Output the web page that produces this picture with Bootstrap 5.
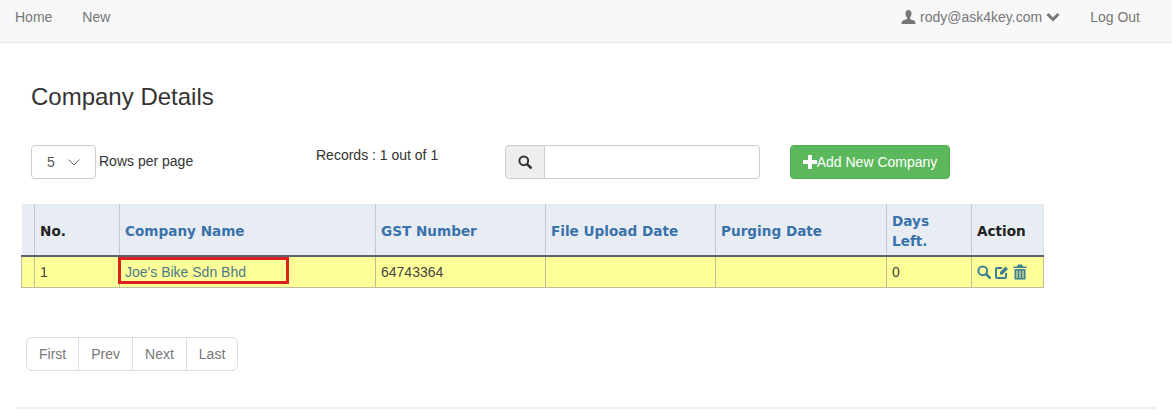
<!DOCTYPE html>
<html lang="en">
<head>
    <meta charset="UTF-8">
    <title>Company Details</title>
    <link href="https://cdn.jsdelivr.net/npm/bootstrap@5.3.2/dist/css/bootstrap.min.css" rel="stylesheet">
    <style>
        body {
            font-family: "Liberation Sans", Arial, sans-serif;
            font-size: 14px;
            color: #333;
            height: 420px;
            overflow: hidden;
        }
        a { color: #337ab7; text-decoration: none; }
        .top-bar {
            height: 43px;
            background: #f8f8f8;
            border-bottom: 1px solid #e7e7e7;
            padding: 0 32px 8px 15px;
        }
        .top-bar a { color: #777; }
        .top-links { gap: 30px; }
        .user-links { gap: 30px; }
        .page-wrap { padding: 0 16px; }
        .page-title {
            font-size: 24px;
            font-weight: 400;
            line-height: 28px;
            margin: 40px 0 34px 15px;
            color: #333;
        }
        .tool-row { margin-left: 15px; height: 34px; }
        .rows-select {
            width: 65px;
            height: 34px;
            border: 1px solid #ccc;
            border-radius: 4px;
            padding-left: 15px;
            color: #555;
        }
        .rows-select svg { margin-left: 13px; }
        .rows-label { margin: -1px 0 0 3px; width: 217px; }
        .records { width: 189px; margin-top: -14px; }
        .search-group { width: 255px; height: 34px; }
        .search-group .input-group-text {
            background: #eee;
            border-color: #ccc;
            padding: 0 12px;
            width: 40px;
            border-radius: 4px 0 0 4px;
        }
        .search-group .form-control {
            border-color: #ccc;
            border-radius: 0 4px 4px 0;
            height: 34px;
        }
        .add-btn {
            margin-left: 30px;
            width: 160px;
            height: 34px;
            background: #5cb85c;
            border: 1px solid #4cae4c;
            border-radius: 4px;
            color: #fff;
            font-size: 14px;
            padding: 0;
        }
        .add-btn:hover { background: #5cb85c; color: #fff; }
        .grid-table {
            width: 1022px;
            margin: 25px 0 0 5px;
            table-layout: fixed;
            border-collapse: collapse;
        }
        .col-a { width: 13px; }
        .col-b { width: 85px; }
        .col-c { width: 256px; }
        .col-d { width: 170px; }
        .col-e { width: 171px; }
        .col-f { width: 72px; }
        .grid-table th {
            background: #e8edf4;
            font-family: "DejaVu Sans", Verdana, sans-serif;
            font-size: 13.6px;
            font-weight: 700;
            line-height: 20px;
            height: 52px;
            padding: 2px 5px 0;
            vertical-align: middle;
            border-left: 1px solid #c5c9cf;
            border-bottom: 2px solid #56636d;
            color: #222;
        }
        .grid-table th:first-child { border-left: 0; }
        .grid-table th:last-child { border-right: 1px solid #dfe6f0; }
        .grid-table th a { color: #3a72aa; }
        .grid-table td {
            background: #ffff99;
            height: 31px;
            padding: 1px 5px 0;
            border: 1px solid #bdbf9b;
            border-top: 0;
            vertical-align: middle;
            color: #444;
        }
        .grid-table td a { color: #4a7a8a; }
        .name-cell { position: relative; }
        .red-box {
            position: absolute;
            left: -2px;
            top: 0;
            width: 171px;
            height: 27px;
            border: 3px solid #dc1f1f;
        }
        .action-icons { gap: 4px; }
        .pager { margin: 49px 0 0 10px; }
        .pager .page-link {
            font-size: 14px;
            color: #777;
            padding: 0 12px;
            line-height: 32px;
            height: 34px;
            border-color: #ddd;
        }
        .foot-rule { margin: 36px 0 0; border-top: 2px solid #eee; opacity: 1; }
    </style>
</head>
<body>
    <nav class="top-bar d-flex justify-content-between align-items-center">
        <div class="top-links d-flex">
            <a href="#">Home</a>
            <a href="#">New</a>
        </div>
        <div class="user-links d-flex">
            <a href="#" class="d-flex align-items-center">
                <svg width="15" height="14" viewBox="0 0 14 14" class="me-1"><path fill="#777" d="M7 0C5 0 4 1.500 4 3.500 4 5.500 5 7 5.500 7.500V9L1.500 10.500C.5 11 0 12 0 14H14C14 12 13.500 11 12.500 10.500L8.500 9V7.500C9 7 10 5.500 10 3.500 10 1.500 9 0 7 0Z"/></svg>
                rody@ask4key.com
                <svg width="14" height="10" viewBox="0 0 14 10" class="ms-1"><path fill="none" stroke="#777" stroke-width="3" d="M1.500 2 7 7.500 12.500 2"/></svg>
            </a>
            <a href="#">Log Out</a>
        </div>
    </nav>

    <div class="page-wrap">
        <h1 class="page-title">Company Details</h1>

        <div class="tool-row d-flex align-items-center">
            <div class="rows-select d-flex align-items-center">
                5
                <svg width="12" height="7" viewBox="0 0 12 7"><path fill="none" stroke="#666" stroke-width="1" d="M.5 .5 6 6 11.500 .5"/></svg>
            </div>
            <div class="rows-label">Rows per page</div>
            <div class="records">Records : 1 out of 1</div>
            <div class="search-group input-group flex-nowrap">
                <span class="input-group-text justify-content-center">
                    <svg width="14" height="14" viewBox="0 0 14 14"><circle cx="5.800" cy="5.800" r="4.400" fill="none" stroke="#333" stroke-width="2"/><path stroke="#333" stroke-width="2.600" stroke-linecap="round" d="M9.300 9.300 12.700 12.700"/></svg>
                </span>
                <input type="text" class="form-control">
            </div>
            <button class="add-btn btn d-flex align-items-center justify-content-center">
                <svg width="14" height="14" viewBox="0 0 14 14"><path fill="#fff" d="M5 0H9V5H14V9H9V14H5V9H0V5H5Z"/></svg>Add New Company
            </button>
        </div>

        <table class="grid-table">
            <colgroup>
                <col class="col-a"><col class="col-b"><col class="col-c"><col class="col-d">
                <col class="col-d"><col class="col-e"><col class="col-b"><col class="col-f">
            </colgroup>
            <thead>
                <tr>
                    <th></th>
                    <th>No.</th>
                    <th><a href="#">Company Name</a></th>
                    <th><a href="#">GST Number</a></th>
                    <th><a href="#">File Upload Date</a></th>
                    <th><a href="#">Purging Date</a></th>
                    <th><a href="#">Days<br>Left.</a></th>
                    <th>Action</th>
                </tr>
            </thead>
            <tbody>
                <tr>
                    <td></td>
                    <td>1</td>
                    <td class="name-cell"><a href="#">Joe's Bike Sdn Bhd</a><span class="red-box"></span></td>
                    <td>64743364</td>
                    <td></td>
                    <td></td>
                    <td>0</td>
                    <td>
                        <div class="action-icons d-flex align-items-center">
                            <svg width="14" height="14" viewBox="0 0 14 14"><circle cx="5.800" cy="5.800" r="4.400" fill="none" stroke="#3f7f94" stroke-width="2"/><path stroke="#3f7f94" stroke-width="2.600" stroke-linecap="round" d="M9.300 9.300 12.700 12.700"/></svg>
                            <svg width="14" height="14" viewBox="0 0 14 14"><path fill="none" stroke="#3f7f94" stroke-width="2" d="M11 8V12C11 12.500 10.500 13 10 13H2C1.500 13 1 12.500 1 12V4C1 3.500 1.500 3 2 3H7"/><path fill="#3f7f94" d="M5 7 10.500 1.500 13 4 7.500 9.500H5Z"/></svg>
                            <svg width="14" height="16" viewBox="0 0 14 15"><path fill="#3f7f94" fill-rule="evenodd" d="M5 0H9L10 2H13.500V3.500H.5V2H4ZM1.500 4.500H12.500V15H1.500ZM3.500 6V13.500H4.500V6ZM6.500 6V13.500H7.500V6ZM9.500 6V13.500H10.500V6Z"/></svg>
                        </div>
                    </td>
                </tr>
            </tbody>
        </table>

        <ul class="pagination pager">
            <li class="page-item"><a class="page-link" href="#">First</a></li>
            <li class="page-item"><a class="page-link" href="#">Prev</a></li>
            <li class="page-item"><a class="page-link" href="#">Next</a></li>
            <li class="page-item"><a class="page-link" href="#">Last</a></li>
        </ul>

        <hr class="foot-rule">
    </div>
    <script src="https://cdn.jsdelivr.net/npm/bootstrap@5.3.2/dist/js/bootstrap.bundle.min.js"></script>
</body>
</html>
